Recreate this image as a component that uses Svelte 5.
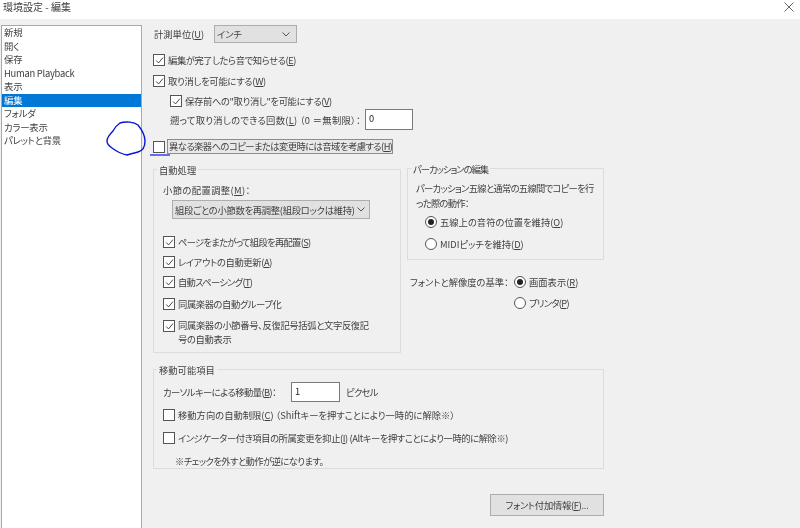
<script>
  const items = ['新規','開く','保存','Human Playback','表示','編集','フォルダ','カラー表示','パレットと背景'];
  const autos = [
    ['ページをまたがって組段を再配置(', 'S', ')', 'a1 s7'],
    ['レイアウトの自動更新(', 'A', ')', 'a2 s35'],
    ['自動スペーシング(', 'T', ')', 'a2 s7'],
    ['同属楽器の自動グループ化', '', '', 'a3 s4']
  ];
</script>

{#snippet box(on)}
  <span class="box">
    {#if on}
      <svg viewBox="0 0 11 11" width="9" height="9"><path d="M1.5 5.5 L4.3 8.5 L9.7 2" fill="none" stroke="#333" stroke-width="1.1"/></svg>
    {/if}
  </span>
{/snippet}

{#snippet radio(on)}
  <span class="radio">{#if on}<span class="dot"></span>{/if}</span>
{/snippet}

{#snippet chevron()}
  <svg class="chev" viewBox="0 0 8 5" width="8" height="5"><path d="M0.5 0.5 L4 4 L7.5 0.5" fill="none" stroke="#555" stroke-width="1"/></svg>
{/snippet}

<div class="win">
  <header class="title">
    <span>環境設定 - 編集</span>
    <svg viewBox="0 0 10 10" width="10" height="10"><path d="M0.5 0.5 L9.5 9.5 M9.5 0.5 L0.5 9.5" stroke="#555" stroke-width="0.9"/></svg>
  </header>
  <main class="body">
    <ul class="list">
      {#each items as it}
        <li class:sel={it === '編集'}>{it}</li>
      {/each}
    </ul>
    <section class="panel">
      <div class="row units">
        <span class="unitlabel">計測単位(<u>U</u>)</span>
        <div class="select small"><span>インチ</span>{@render chevron()}</div>
      </div>
      <div class="row r1 s4">{@render box(true)}<span>編集が完了したら音で知らせる(<u>E</u>)</span></div>
      <div class="row r2 s2">{@render box(true)}<span>取り消しを可能にする(<u>W</u>)</span></div>
      <div class="row r3 s35">{@render box(true)}<span>保存前への"取り消し"を可能にする(<u>V</u>)</span></div>
      <div class="row r4">
        <span class="undolabel">遡って取り消しのできる回数(<u>L</u>) （0 ＝無制限）：</span>
        <div class="input undo">0</div>
      </div>
      <div class="row r5 s5">{@render box(false)}<span class="focus">異なる楽器へのコピーまたは変更時には音域を考慮する(<u>H</u>)</span></div>

      <div class="cols">
        <div class="group auto">
          <span class="legend">自動処理</span>
          <div class="row measure">小節の配置調整(<u>M</u>)：</div>
          <div class="select wide s2"><span>組段ごとの小節数を再調整(組段ロックは維持)</span>{@render chevron()}</div>
          {#each autos as a}
            <div class="row {a[3]}">{@render box(true)}<span>{a[0]}{#if a[1]}<u>{a[1]}</u>{/if}{a[2]}</span></div>
          {/each}
          <div class="multi s35">{@render box(true)}<span>同属楽器の小節番号、反復記号括弧と文字反復記<br />号の自動表示</span></div>
        </div>
        <div class="right">
          <div class="group perc">
            <span class="legend s10">パーカッションの編集</span>
            <p class="s7">パーカッション五線と通常の五線間でコピーを行<br />った際の動作：</p>
            <div class="row rad1">{@render radio(true)}<span>五線上の音符の位置を維持(<u>O</u>)</span></div>
            <div class="row rad2">{@render radio(false)}<span>MIDIピッチを維持(<u>D</u>)</span></div>
          </div>
          <div class="basis">
            <span class="nw">フォントと解像度の基準：</span>
            <div class="row">{@render radio(true)}<span>画面表示(<u>R</u>)</span></div>
            <span></span>
            <div class="row s7">{@render radio(false)}<span>プリンタ(<u>P</u>)</span></div>
          </div>
        </div>
      </div>

      <div class="group move">
        <span class="legend">移動可能項目</span>
        <div class="row cursor">
          <span class="curlabel s5">カーソルキーによる移動量(<u>B</u>)：</span>
          <div class="input px">1</div>
          <span class="s7">ピクセル</span>
        </div>
        <div class="row m1">{@render box(false)}<span>移動方向の自動制限(<u>C</u>) （Shiftキーを押すことにより一時的に解除※）</span></div>
        <div class="row m2 s4">{@render box(false)}<span>インジケーター付き項目の所属変更を抑止(<u>I</u>) (Altキーを押すことにより一時的に解除※)</span></div>
        <div class="row note s5">※チェックを外すと動作が逆になります。</div>
      </div>

      <div class="actions"><button class="s2">フォント付加情報(<u>F</u>)...</button></div>
    </section>
  </main>

  <svg class="ink" viewBox="0 0 800 528" width="800" height="528">
    <path d="M120 123 C126 121 134 122 138 125 C142 130 145 135 145 141 C145 147 142 151 138 152 C134 153 130 154 127 155 C122 154 116 151 112 148 C109 146 107 144 107 141 C107 137 110 134 113 131 C115 127 117 125 120 123 Z" fill="none" stroke="#0a14d8" stroke-width="1.4"/>
    <path d="M150 155 H170" stroke="#0a14d8" stroke-width="1.2"/>
  </svg>
</div>

<style>
  :global(body) { margin: 0; background: #f0f0f0; }
  .win {
    position: relative; width: 800px; height: 528px; overflow: hidden; background: #f0f0f0;
    font: 9.3px/14px "Noto Sans CJK JP", "Noto Sans", sans-serif; color: #3f3f3f;
    font-feature-settings: "palt"; filter: blur(0.3px);
  }
  .s2 { letter-spacing: -0.28px; }
  .s35 { letter-spacing: -0.35px; }
  .s4 { letter-spacing: -0.42px; }
  .s5 { letter-spacing: -0.55px; }
  .s7 { letter-spacing: -0.7px; }
  .s10 { letter-spacing: -1px; }
  u { text-underline-offset: 1px; }
  .nw { white-space: nowrap; }
  .title {
    height: 19px; background: #fff; display: flex; align-items: center; justify-content: space-between;
    padding: 0 6px 5px 3px; box-sizing: border-box; font-size: 10px;
  }
  .body { display: flex; height: 509px; }
  .list {
    list-style: none; margin: 6px 0 0 1px; padding: 0; width: 141px; height: 503px; box-sizing: border-box;
    background: #fff; border: 1px solid #a9a9a9; border-bottom: 0;
  }
  .list li { height: 13.55px; line-height: 13.5px; padding-left: 2px; font-size: 9.4px; letter-spacing: -0.25px; white-space: nowrap; }
  .list li.sel { background: #0078d7; color: #fff; }
  .panel { margin-left: 11px; width: 451px; }
  .row { display: flex; align-items: center; height: 14px; white-space: nowrap; }
  .box {
    flex: none; width: 10px; height: 10px; border: 1px solid #555; background: #fff; margin-right: 3px;
    display: flex; align-items: center; justify-content: center;
  }
  .radio {
    flex: none; width: 10px; height: 10px; border: 1px solid #555; border-radius: 50%; background: #fff; margin-right: 3px;
    display: flex; align-items: center; justify-content: center;
  }
  .dot { width: 6px; height: 6px; border-radius: 50%; background: #222; }
  .select {
    display: flex; align-items: center; justify-content: space-between; box-sizing: border-box;
    background: #e1e1e1; border: 1px solid #adadad; padding: 0 4px 0 2px; white-space: nowrap; overflow: hidden;
  }
  .select > span { overflow: hidden; }
  .chev { flex: none; margin-left: 2px; }
  .unitlabel { width: 60px; }
  .small { width: 83px; height: 18px; padding-right: 6px; }
  .wide { width: 198px; height: 19px; margin: 3px 0 0 9px; }
  .input { box-sizing: border-box; background: #fff; border: 1px solid #7a7a7a; padding: 0 3px; line-height: 16px; color: #222; flex: none; }
  .units { height: 18px; margin-top: 6px; padding-left: 1px; }
  .r1 { margin-top: 10px; }
  .r2 { margin-top: 7px; }
  .r3 { margin-top: 6px; padding-left: 17px; }
  .r4 { margin-top: 1px; height: 21px; padding-left: 17px; }
  .undolabel { width: 195px; flex: none; letter-spacing: 0.3px; }
  .undo { width: 48px; height: 21px; }
  .r5 { margin-top: 9px; height: 15px; }
  .focus {
    box-sizing: border-box; width: 226px; border: 1px solid #8c8c8c; background: #e8e8e8; padding: 0 0 0 1px;
    line-height: 13px; margin-left: -1px; overflow: hidden;
  }
  .cols { display: flex; align-items: flex-start; margin-top: 14px; gap: 6px; }
  .group { position: relative; box-sizing: border-box; border: 1px solid #dcdcdc; }
  .legend { position: absolute; top: -7px; left: 3px; background: #f0f0f0; padding: 0 2px; white-space: nowrap; }
  .auto { width: 248px; height: 184px; margin-top: 1px; padding-top: 13px; padding-left: 9px; }
  .measure { letter-spacing: 0.4px; }
  .a1 { margin-top: 16px; }
  .a2 { margin-top: 6px; }
  .a3 { margin-top: 8px; }
  .multi { display: flex; margin-top: 7px; line-height: 14px; white-space: nowrap; }
  .multi .box { margin-top: 2px; }
  .right { width: 197px; }
  .perc { height: 92px; padding: 12px 8px 0; }
  .perc p { margin: 0; line-height: 15px; white-space: nowrap; }
  .rad1 { margin-top: 4px; padding-left: 9px; }
  .rad2 { margin-top: 8px; padding-left: 9px; }
  .basis { display: grid; grid-template-columns: 104px auto; row-gap: 7px; margin: 15px 0 0 3px; align-items: center; justify-content: start; }
  .move { width: 451px; height: 100px; margin-top: 16px; padding-left: 9px; }
  .cursor { height: 20px; margin-top: 12px; }
  .curlabel { width: 128px; flex: none; }
  .px { width: 49px; height: 20px; margin-right: 6px; }
  .m1 { margin-top: 6px; }
  .m2 { margin-top: 9px; }
  .note { margin-top: 9px; padding-left: 12px; }
  .actions { display: flex; justify-content: flex-end; margin-top: 25px; }
  button {
    width: 114px; height: 22px; background: #e1e1e1; border: 1px solid #adadad; padding: 0;
    font: inherit; font-feature-settings: inherit; color: #3f3f3f;
  }
  .ink { position: absolute; inset: 0; pointer-events: none; }
</style>
